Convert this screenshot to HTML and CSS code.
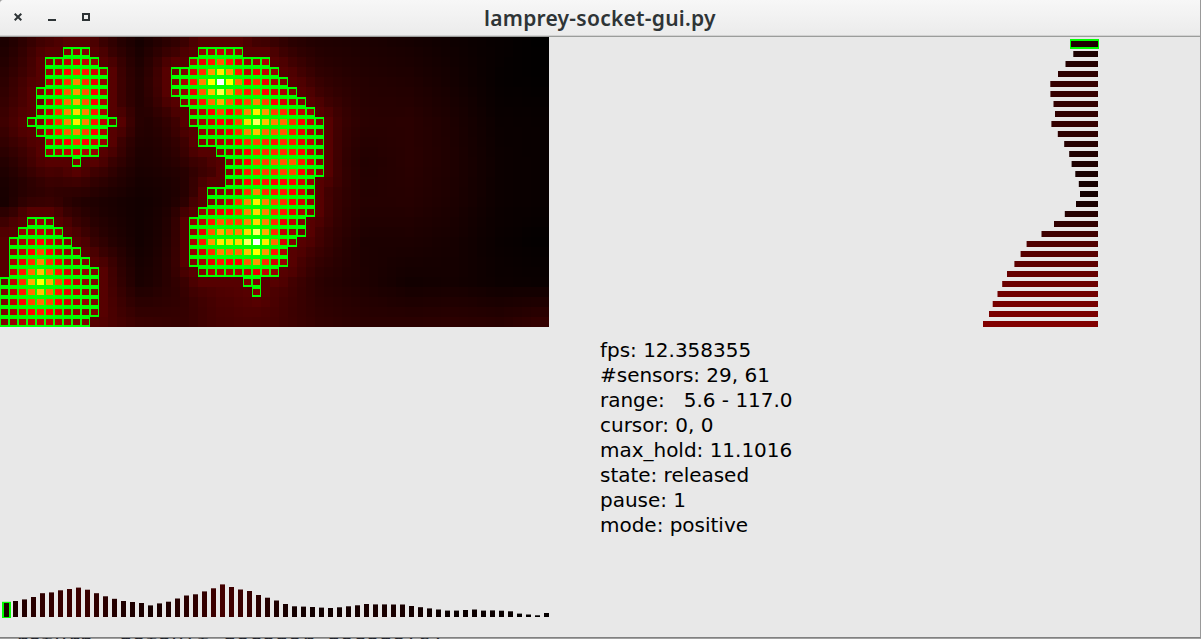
FILE: index.html
```html
<!DOCTYPE html>
<html lang="en">
<head>
<meta charset="utf-8">
<title>lamprey-socket-gui.py</title>
<link rel="stylesheet" href="styles.css">
</head>
<body>
<div class="window">
  <header class="titlebar">
    <div class="controls">
      <svg class="control" viewBox="0 0 8 8"><path d="M.7.7 7.3 7.3M7.3.7.7 7.3" stroke="#2e3436" stroke-width="2" fill="none"/></svg>
      <svg class="control" viewBox="0 0 8 8"><path d="M0 7h8" stroke="#2e3436" stroke-width="2"/></svg>
      <svg class="control" viewBox="0 0 8 8"><path d="M1 1h6v6H1z" stroke="#2e3436" stroke-width="2" fill="none"/></svg>
    </div>
    <h1 class="title">lamprey-socket-gui.py</h1>
  </header>
  <main class="content">
    <section class="left">
      <svg class="heatmap" id="heatmap" width="549" height="290"></svg>
      <svg class="columns" id="columns" width="549" height="40"></svg>
    </section>
    <section class="right">
      <svg class="rows" id="rows" width="600" height="290"></svg>
      <div class="status">
        <div class="line">fps: 12.358355</div>
        <div class="line">#sensors: 29, 61</div>
        <div class="line">range:   5.6 - 117.0</div>
        <div class="line">cursor: 0, 0</div>
        <div class="line">max_hold: 11.1016</div>
        <div class="line">state: released</div>
        <div class="line">pause: 1</div>
        <div class="line">mode: positive</div>
      </div>
    </section>
  </main>
</div>
<div class="behind"><div class="code">return _default_decoder.decode(s)</div></div>
<script src="app.js"></script>
</body>
</html>
```
FILE: styles.css
```css
* { box-sizing: border-box; }
body { margin: 0; width: 1201px; height: 639px; overflow: hidden; background: #a0a0a0; }
.window {
  width: 1201px; height: 638px; display: flex; flex-direction: column;
  background: #e8e8e8; border-right: 1px solid #999; border-bottom: 1px solid #808080;
  border-top-left-radius: 4px; overflow: hidden;
}
.titlebar {
  height: 37px; flex: none; display: grid; grid-template-columns: 484px 1fr;
  align-items: center; background: linear-gradient(#f7f7f7, #ebebeb);
  border-bottom: 1px solid #9b9d9b; box-shadow: inset 0 -1px #d2d2d2;
}
.controls { display: flex; gap: 26px; padding: 0 0 3px 14px; }
.control { width: 8px; height: 8px; display: block; }
.title {
  margin: 0; color: #2e3436; white-space: nowrap; letter-spacing: .25px;
  font: 600 21px/28px "Noto Sans", "Open Sans", sans-serif;
}
.content { flex: 1; display: flex; min-height: 0; }
.left { width: 600px; display: flex; flex-direction: column; justify-content: space-between; padding-bottom: 17px; }
.right { width: 600px; display: flex; flex-direction: column; }
.heatmap, .columns, .rows { display: block; flex: none; }
.status { padding-top: 11px; font: 20px/25px "DejaVu Sans", sans-serif; color: #000; }
.line { white-space: pre; letter-spacing: -.02px; }
.behind { height: 1px; overflow: hidden; padding-left: 15px; }
.code { margin-top: -9px; font: 21.6px/25px "DejaVu Sans Mono", monospace; color: #20242c; white-space: pre; }
```
FILE: app.js
```js
// Touched sensors as row: [[first column, intensities in base 36], ...]
const touched = {
  1: [[7, '676'], [22, '78987']],
  2: [[5, '679a97'], [21, '8bdgda778']],
  3: [[5, '79ceda7'], [19, '56aejnjd9b97']],
  4: [[5, '8aeieb7'], [19, '68diozohceb86']],
  5: [[4, '68cgjgc8'], [19, '67bglrkfdfca86']],
  6: [[4, '59dhkgc8'], [20, '69dhkgdfifca86']],
  7: [[4, '69eimid8'], [21, '79cfceinjfeb97']],
  8: [[3, '56aeinid95'], [21, '68acbfmslihec96']],
  9: [[4, '69dgifc8'], [22, '789beilhggdb86']],
  10: [[5, '8aceca7'], [22, '6789cefededb96']],
  11: [[5, '789a87'], [24, '679ceeeedc96']],
  12: [[8, '6'], [25, '69cffgggda6']],
  13: [[25, '69defeffc96']],
  14: [[25, '68cddccca7']],
  15: [[23, '5679eieddca6']],
  16: [[23, '679einifeca7']],
  17: [[22, '79bceimiedb86']],
  18: [[3, '676'], [21, '79dgffimieb96']],
  19: [[2, '78987'], [21, '7bgkiimske975']],
  20: [[1, '68aca86'], [21, '8djnmmsznha6']],
  21: [[1, '79cfc976'], [21, '7aeihhlojd8']],
  22: [[1, '8beieb876'], [21, '68bdccgjea7']],
  23: [[1, '9dhlhda876'], [22, '688889b97']],
  24: [[0, '59ekokfc976'], [27, '66']],
  25: [[0, '69dhlhdb976'], [28, '6']],
  26: [[0, '69cfhfca876']],
  27: [[0, '68acdca8766']],
  28: [[0, '6789998766']],
};

// Resting level, sampled every 4 rows and 5 columns.
const rest = [
  [26, 58, 48, 20, 44, 66, 40, 32, 28, 22, 14, 7, 0],
  [42, 80, 56, 32, 70, 90, 80, 46, 36, 32, 20, 6, 2],
  [56, 90, 66, 28, 48, 90, 90, 56, 40, 42, 28, 10, 8],
  [34, 68, 50, 26, 38, 66, 90, 50, 32, 42, 30, 12, 8],
  [16, 34, 28, 18, 20, 60, 90, 54, 36, 38, 28, 12, 8],
  [80, 80, 40, 18, 30, 70, 90, 52, 28, 28, 22, 9, 3],
  [90, 90, 66, 24, 42, 80, 66, 40, 30, 18, 20, 12, 10],
  [90, 90, 76, 56, 52, 74, 66, 50, 42, 42, 44, 40, 52],
];

const rowLefts = [1071, 1073.3, 1065.5, 1058, 1050.3, 1050.4, 1053.5, 1055, 1051.4, 1057.8,
  1064.2, 1069.2, 1071.6, 1075.3, 1078.8, 1080, 1076, 1064.8, 1054, 1041.5, 1026.6, 1020.6,
  1014.4, 1007, 1002.2, 997.5, 992.7, 989, 983];
const columnTops = [601.8, 601, 599.4, 597, 593.2, 592.4, 590.3, 589, 587.6, 589.7, 593.2,
  596.3, 598.8, 601, 602, 603, 605.4, 603.4, 601.7, 598.5, 595.5, 594.3, 591.4, 588.3, 584.4,
  587, 589.5, 591, 595, 597.7, 600.5, 604, 606.3, 606.6, 607, 607.6, 608, 607.3, 606.3, 605.3,
  604, 604.4, 604.4, 604.5, 604.5, 606, 607.2, 608.4, 609.5, 610.6, 610.6, 610, 609.5, 610.6,
  610.4, 610.7, 611.3, 613.6, 614.5, 615.3, 613];

const rect = (x, y, w, h, fill) => `<rect x="${x}" y="${y}" width="${w}" height="${h}" fill="${fill}"/>`;
const rgb = (r, g, b) => `rgb(${Math.round(r)},${Math.round(g)},${Math.round(b)})`;
const unit = v => Math.max(0, Math.min(1, v));
const hot = v => rgb(255 * unit(v / 12), 255 * unit((v - 12) / 12), 255 * unit((v - 24) / 11));

const cells = new Map();
for (const [row, runs] of Object.entries(touched))
  for (const [start, values] of runs)
    [...values].forEach((ch, i) => cells.set(row * 61 + start + i, parseInt(ch, 36)));

function restLevel(r, c) {
  const i = Math.min(6, Math.floor(r / 4)), j = Math.min(11, Math.floor(c / 5));
  const u = r / 4 - i, v = c / 5 - j;
  const base = (1 - u) * ((1 - v) * rest[i][j] + v * rest[i][j + 1])
    + u * ((1 - v) * rest[i + 1][j] + v * rest[i + 1][j + 1]);
  let d = 99;
  for (const k of cells.keys()) d = Math.min(d, Math.hypot(Math.floor(k / 61) - r, k % 61 - c));
  const near = Math.exp(-(d - 1) / 1.2);
  return Math.min(base, 68 + 18 * near) * (1 - near) + 86 * near;
}

let map = '';
for (let r = 0; r < 29; r++)
  for (let c = 0; c < 61; c++) {
    const v = cells.get(r * 61 + c), x = c * 9, y = r * 10;
    if (v === undefined) map += rect(x, y, 9, 10, rgb(restLevel(r, c), 0, 0));
    else map += rect(x, y, 9, 10, '#0f0') + rect(x + 1, y + 2, 7, 6, hot(v));
  }
document.getElementById('heatmap').innerHTML = map;

document.getElementById('rows').innerHTML = rect(470, 2, 29, 10, '#0f0')
  + rowLefts.map((x, i) => rect(x - 600, 4 + i * 10, 1098 - x, 6, rgb((1098 - x) * 1.12, 0, 0))).join('');

document.getElementById('columns').innerHTML = rect(2, 21.8, 9, 16.2, '#0f0')
  + columnTops.map((y, i) => {
    const top = i ? y : 603;
    return rect(4 + i * 9, top - 580, 5, 617 - top, rgb(Math.max(4, (617 - y) * 2.2 - 4), 0, 0));
  }).join('');
```
